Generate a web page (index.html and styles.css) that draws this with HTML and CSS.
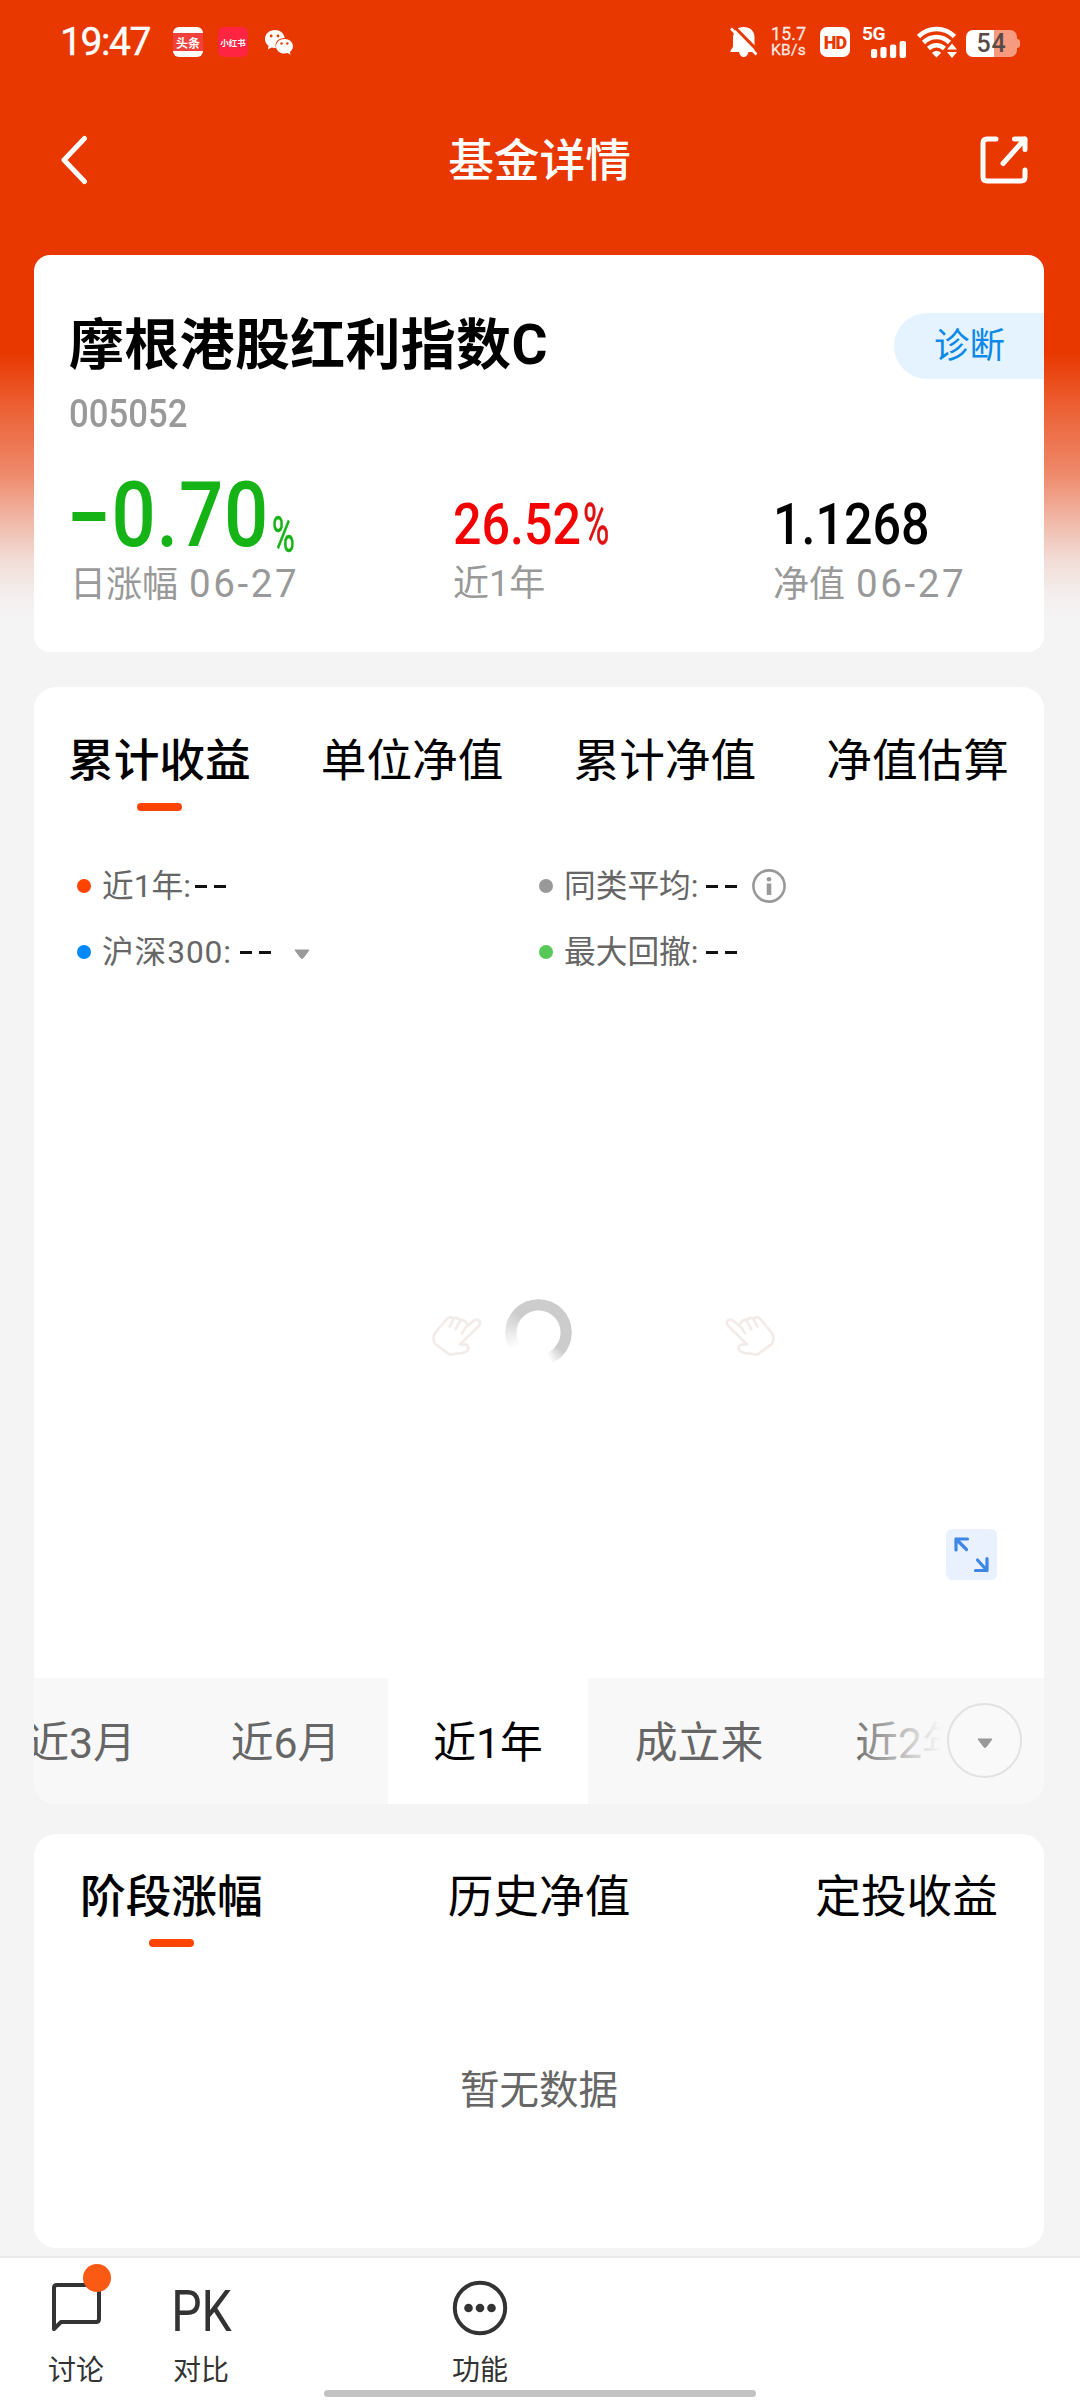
FILE: index.html
```html
<!DOCTYPE html>
<html lang="zh-CN">
<head>
<meta charset="utf-8">
<title>基金详情</title>
<link rel="stylesheet" href="styles.css">
</head>
<body>
<div class="screen">
  <div class="status">
    <span class="time">19:47</span>
    <span class="app toutiao"><span>头条</span></span>
    <span class="app xhs"><span>小红书</span></span>
    <svg class="wechat" width="30" height="26" viewBox="0 0 30 26"><path d="M11 1C5 1 1 5 1 10c0 3 1.400 5.300 3.600 7l-.8 3.500 3.700-2c1 .3 2.300.500 3.500.500l.8 0C10.500 12.500 14.500 9 20.700 9 20 4 16 1 11 1z" fill="#fff"/><path d="M20.500 10c-4.900 0-8.500 3.200-8.500 7.300s3.600 7.300 8.500 7.300c1.100 0 2.100-.2 3.100-.5l3 1.700-.7-2.900c2-1.400 3.100-3.400 3.100-5.600 0-4.100-3.600-7.300-8.500-7.300z" fill="#fff"/><g fill="#e83800"><circle cx="7.200" cy="7" r="1.400"/><circle cx="14" cy="7" r="1.400"/><circle cx="17.500" cy="14.500" r="1.200"/><circle cx="23.300" cy="14.500" r="1.200"/></g></svg>
    <span class="spring"></span>
    <svg class="bell" width="28" height="32" viewBox="0 0 28 32"><path d="M13.500 1C7 1 3 5 3 11v10l-2.500 3.500V26H9c.6 3 2.500 5 4.700 5s4.200-2 4.800-5h6L24.500 21V11C24.500 5 20 1 13.500 1z" fill="#fff"/><path d="M-1 2L3.500 6.500V9L0 14z" fill="#e83800"/><path d="M3.500 0L28 25" stroke="#e83800" stroke-width="3"/><path d="M1 2.500L26.500 28.500" stroke="#fff" stroke-width="2.600"/></svg>
    <span class="speed"><span>15.7</span><span>KB/s</span></span>
    <span class="hd">HD</span>
    <span class="signal"><span class="g5">5G</span><svg width="36" height="18" viewBox="0 0 36 18" fill="#fff"><rect x="0" y="9" width="6.200" height="9" rx="2"/><rect x="9.400" y="7" width="6.200" height="11" rx="2"/><rect x="19" y="4.500" width="6.200" height="13.500" rx="2"/><rect x="28.600" y="1" width="6.400" height="17" rx="2"/></svg></span>
    <svg class="wifi" width="41" height="32" viewBox="0 0 41 32"><g fill="none" stroke="#fff" stroke-width="4.600"><path d="M1.500 10.500C11.500.5 27.500.5 37.500 10.500"/><path d="M6.500 16.500c7.500-7.300 18.500-7.300 26 0"/><path d="M11.500 22.500c4.600-4.300 11.400-4.300 16 0"/></g><path d="M15 27c2.500-2.600 6.500-2.600 9 0l-4.500 4.500z" fill="#fff"/><path d="M35 15.500l-7 8.500v3l7 8 7-9z" fill="#e83800"/><path d="M35 17.500l5 6h-10zM30 26h10l-5 6z" fill="#fff"/></svg>
    <span class="battery"><span>54</span></span>
  </div>

  <div class="nav">
    <svg width="28" height="50" viewBox="0 0 28 50"><path d="M24.500 3.500L4 25l20.500 21.500" fill="none" stroke="#fff" stroke-width="5" stroke-linecap="round" stroke-linejoin="round"/></svg>
    <h1>基金详情</h1>
    <svg width="50" height="50" viewBox="0 0 50 50" fill="none" stroke="#fff" stroke-width="5" stroke-linecap="round" stroke-linejoin="round"><path d="M17 4H8Q4 4 4 8v34q0 4 4 4h34q4 0 4-4v-7"/><path d="M35.500 4h10.500v10.500M46 4L24 28.500"/></svg>
  </div>

  <div class="card summary">
    <div class="fund-head"><h2>摩根港股红利指数C</h2><span class="diag">诊断</span></div>
    <div class="code"><span>005052</span></div>
    <div class="stats">
      <div class="stat green"><div class="value"><span class="big"><i class="minus"></i>0.70</span><span class="pct">%</span></div><div class="label">日涨幅 <span>06-27</span></div></div>
      <div class="stat red"><div class="value"><span class="num">26.52</span><span class="pct">%</span></div><div class="label">近1年</div></div>
      <div class="stat"><div class="value"><span class="num">1.1268</span></div><div class="label">净值 <span>06-27</span></div></div>
    </div>
  </div>

  <div class="card chart-card">
    <div class="tabs">
      <span class="tab active">累计收益</span><span class="tab">单位净值</span><span class="tab">累计净值</span><span class="tab">净值估算</span>
    </div>
    <div class="legend">
      <div class="year"><i class="dot orange"></i><span>近1年:</span><b><i></i><i></i></b></div>
      <div><i class="dot grey"></i><span>同类平均:</span><b><i></i><i></i></b><svg class="info" width="34" height="34" viewBox="0 0 34 34"><circle cx="17" cy="17" r="15.600" fill="none" stroke="#999" stroke-width="2.600"/><circle cx="17" cy="10.300" r="2.300" fill="#999"/><path d="M17 14.500V26" stroke="#999" stroke-width="4.600"/></svg></div>
      <div class="wide"><i class="dot blue"></i><span>沪深300:</span><b><i></i><i></i></b><svg class="caret" width="18" height="11" viewBox="0 0 18 11"><path d="M2 1h14L10.500 8.500q-1.500 2-3 0z" fill="#999" stroke="#999" stroke-linejoin="round"/></svg></div>
      <div><i class="dot lime"></i><span>最大回撤:</span><b><i></i><i></i></b></div>
    </div>
    <div class="chart">
      <div class="hint">
        <svg class="hand" width="52" height="44" viewBox="94 130 156 132"><path d="M150 252L107 220Q101 214 102 197 103 191 108 185L141 145Q150 136 163 143 171 139 181 148 192 145 198 155 203 157 203 167L224 149Q236 143 241 153 243 160 237 166L181 221 200 222Q210 228 204 239 199 244 188 247ZM150 168L162 144M168 176L182 150M187 188L202 164" fill="none" stroke="#f2ebe8" stroke-width="8" stroke-linejoin="round" stroke-linecap="round"/></svg>
        <span class="spinner"></span>
        <svg class="hand flip" width="52" height="44" viewBox="94 130 156 132"><path d="M150 252L107 220Q101 214 102 197 103 191 108 185L141 145Q150 136 163 143 171 139 181 148 192 145 198 155 203 157 203 167L224 149Q236 143 241 153 243 160 237 166L181 221 200 222Q210 228 204 239 199 244 188 247ZM150 168L162 144M168 176L182 150M187 188L202 164" fill="none" stroke="#f2ebe8" stroke-width="8" stroke-linejoin="round" stroke-linecap="round"/></svg>
      </div>
      <svg class="expand" width="51" height="51" viewBox="0 0 51 51"><rect width="51" height="51" rx="6" fill="#e8f1fd"/><g fill="none" stroke="#3e87e6" stroke-width="3.200" stroke-linecap="round" stroke-linejoin="round"><path d="M10 21V10h11.500M10 10l10.500 10.500M41 29.500V41.500H29.500M41 41.500L31.500 31"/></g></svg>
    </div>
    <div class="periods">
      <span>近3月</span><span>近6月</span><span class="on">近1年</span><span>成立来</span><span>近2年</span>
      <div class="fade"><div class="more"><svg width="18" height="11" viewBox="0 0 18 11"><path d="M2 1h14L10.500 8.500q-1.500 2-3 0z" fill="#999" stroke="#999" stroke-linejoin="round"/></svg></div></div>
    </div>
  </div>

  <div class="card history">
    <div class="tabs"><span class="tab active">阶段涨幅</span><span class="tab">历史净值</span><span class="tab">定投收益</span></div>
    <div class="empty">暂无数据</div>
  </div>

  <div class="bottom">
    <div class="action discuss"><span class="icon"><svg width="54" height="54" viewBox="0 0 54 54"><path d="M5 49V8q0-3 3-3h39q3 0 3 3v31q0 3-3 3H12z" fill="none" stroke="#333" stroke-width="4" stroke-linejoin="round"/></svg><i class="badge"></i></span><span>讨论</span></div>
    <div class="action compare"><span class="icon pk"><span>PK</span></span><span>对比</span></div>
    <div class="action more-fn"><span class="icon"><svg width="56" height="56" viewBox="0 0 56 56"><circle cx="28" cy="28" r="25.200" fill="none" stroke="#333" stroke-width="4"/><g fill="#333"><circle cx="16.500" cy="28" r="4.300"/><circle cx="28" cy="28" r="4.300"/><circle cx="39.500" cy="28" r="4.300"/></g></svg></span><span>功能</span></div>
    <div class="home"></div>
  </div>
</div>
</body>
</html>
```
FILE: styles.css
```css
* { box-sizing: border-box; margin: 0; padding: 0; }
body { font-family: Roboto, "Noto Sans CJK SC", sans-serif; color: #000; }
i { font-style: normal; }
svg { display: block; flex: none; }
.screen {
  width: 1080px; height: 2400px; overflow: hidden;
  display: flex; flex-direction: column;
  background: linear-gradient(#e83800 0, #e83800 352px, #ea4a18 378px, #ec6034 407px, #ee8a6c 475px, #f0b5a3 517px, #f2dcd6 560px, #f4efee 595px, #f4f4f4 620px);
}
.status { height: 84px; flex: none; display: flex; align-items: center; padding: 0 63px 0 60px; color: #fff; }
.time { font-size: 39px; letter-spacing: -1.4px; width: 113px; font-weight: 400; -webkit-text-stroke: .4px #fff; }
.app { width: 30px; height: 30px; border-radius: 6px; overflow: hidden; display: flex; align-items: center; justify-content: center; white-space: nowrap; margin-right: 15px; font-weight: 700; }
.toutiao { background: linear-gradient(#fff 6px, #f2413c 6px, #f2413c 24px, #fff 24px); font-size: 12px; }
.xhs { background: #ff2442; font-size: 8.500px; }
.wechat { margin-left: 1px; }
.spring { flex: 1; }
.bell { margin-right: 13px; }
.speed { display: flex; flex-direction: column; width: 49px; font-size: 15.500px; line-height: 15px; color: #ffe9e2; }
.speed span { letter-spacing: .3px; -webkit-text-stroke: .3px #ffe9e2; }
.speed span:first-child { font-size: 17.500px; line-height: 17px; }
.hd { width: 30px; height: 30px; border-radius: 7px; background: #fff; color: #e83800; font-size: 18px; font-weight: 900; line-height: 31px; text-align: center; letter-spacing: -.8px; }
.signal { width: 45px; height: 31px; margin-left: 12px; display: flex; flex-direction: column; align-items: flex-end; }
.g5 { font-size: 19px; line-height: 14px; height: 13px; font-weight: 700; align-self: flex-start; letter-spacing: -.5px; }
.wifi { margin-left: 10px; }
.battery { margin-left: 8px; margin-top: 2px; width: 51px; height: 27px; border-radius: 7px; background: linear-gradient(90deg, #fff 28px, #f69a80 28px); color: #5a4a47; font-size: 25px; font-weight: 500; line-height: 28px; letter-spacing: .8px; text-align: center; position: relative; }
.battery::after { content: ""; position: absolute; left: 51px; top: 9px; width: 3px; height: 9px; border-radius: 0 3px 3px 0; background: #f69a80; }

.nav { height: 152px; flex: none; display: flex; align-items: center; justify-content: space-between; padding: 0 51px 0 60px; color: #fff; margin-bottom: 19px; }
.nav h1 { font-size: 45.700px; font-weight: 500; line-height: 60px; margin-left: 12px; padding-top: 4px; }

.card { width: 1010px; margin-left: 34px; background: #fff; border-radius: 22px; flex: none; overflow: hidden; }
.summary { height: 397px; border-radius: 16px; padding: 58px 0 0 35px; margin-bottom: 35px; }
.fund-head { display: flex; justify-content: space-between; height: 66px; }
.fund-head h2 { font-size: 55px; line-height: 64px; font-weight: 700; letter-spacing: .3px; }
.diag { width: 150px; padding-left: 40px; font-size: 35.500px; line-height: 66px; color: #0d89e8; background: #e5f3ff; border-radius: 33px 0 0 33px; }
.code { height: 50px; margin-top: 9px; font-size: 39px; line-height: 52px; font-weight: 500; color: #999; }
.code span { display: inline-block; transform: scaleX(.89); transform-origin: left; }
.stats { display: grid; grid-template-columns: 383px 320px 1fr; }
.value { height: 118px; display: flex; align-items: flex-end; white-space: nowrap; font-weight: 500; }
.value span { display: block; transform-origin: left; }
.num { font-size: 58px; line-height: 60px; padding-bottom: 2px; margin-left: 1px; transform: scaleX(.865); }
.big { font-size: 90px; line-height: 90px; height: 85px; font-weight: 500; display: block; letter-spacing: 1px; transform: scaleX(.865); }
.minus { display: inline-block; width: 38px; height: 9px; margin: 0 7px 25px 4px; background: currentColor; }
.green .value { color: #15b315; }
.red .value { color: #f40000; }
.pct { font-weight: 400; }
.green .pct { font-size: 50px; line-height: 50px; height: 46px; margin-left: -28px; transform: scaleX(.62); -webkit-text-stroke: .6px; }
.red .pct { font-size: 58px; line-height: 60px; padding-bottom: 2px; margin-left: -18px; transform: scaleX(.62); color: #e01010; -webkit-text-stroke: .6px; }
.label { font-size: 36px; line-height: 44px; margin-top: 6px; padding-left: 1px; color: #999; white-space: nowrap; }
.label span { font-size: 38.500px; letter-spacing: 2.600px; margin-left: 2px; }

.chart-card { height: 1117px; padding-top: 45px; margin-bottom: 30px; display: flex; flex-direction: column; }
.tabs { display: flex; justify-content: space-between; padding: 0 35px 0 34px; }
.tab { font-size: 45.700px; line-height: 60px; height: 79px; white-space: nowrap; }
.tab.active { font-weight: 500; display: flex; flex-direction: column; align-items: center; }
.tab.active::after { content: ""; width: 45px; height: 8px; margin-top: 11px; border-radius: 4px; background: #ff4300; }
.legend { margin-top: 42px; padding-left: 43px; display: grid; grid-template-columns: 462px 1fr; grid-auto-rows: 66px; font-size: 31.700px; color: #666; }
.legend > div { display: flex; align-items: center; white-space: nowrap; }
.legend span { line-height: 60px; padding-top: 2px; }
.dot { width: 14px; height: 14px; border-radius: 50%; margin-right: 11px; }
.orange { background: #ff4300; } .grey { background: #999; } .blue { background: #0088ff; } .lime { background: #58c858; }
.legend b { display: flex; gap: 7px; margin-left: 8px; }
.legend .year b { margin-left: 4px; }
.legend b i { width: 12px; height: 3px; background: #111; }
.wide span { letter-spacing: .9px; }
.info { margin-left: 15px; }
.caret { margin-left: 22px; margin-top: 4px; }
.chart { flex: 1; display: flex; flex-direction: column; }
.hint { height: 68px; margin: 313px 0 0 397px; display: flex; align-items: center; }
.hand { margin-top: 8px; }
.flip { transform: scaleX(-1); margin-left: 152px; }
.spinner { width: 67px; height: 67px; margin-left: 22px; border-radius: 50%; background: conic-gradient(#ccc 0 128deg, rgba(204,204,204,0) 158deg 238deg, #ccc 312deg); -webkit-mask: radial-gradient(circle, transparent 21.500px, #000 22.500px); mask: radial-gradient(circle, transparent 21.500px, #000 22.500px); }
.expand { align-self: flex-end; margin: 163px 47px 0 0; }
.periods { position: relative; height: 126px; flex: none; background: #f8f8f8; display: grid; grid-template-columns: 204px 205px 200px 222px 200px; margin-left: -55px; width: 1065px; font-size: 42.800px; line-height: 131px; color: #666; text-align: center; white-space: nowrap; }
.on { background: #fff; color: #000; }
.fade { position: absolute; right: 0; top: 0; width: 184px; height: 126px; padding: 25px 22px 0 0; line-height: 0; display: flex; justify-content: flex-end; background: linear-gradient(90deg, rgba(248,248,248,.15), rgba(248,248,248,.8) 60px, #f8f8f8 82px); }
.more { width: 75px; height: 75px; border: 2px solid #e2e2e2; border-radius: 50%; background: #f9f9f9; display: flex; align-items: center; justify-content: center; padding-top: 5px; }

.history { height: 414px; padding-top: 34px; margin-bottom: 8px; }
.history .tabs { padding: 0 46px 0 46px; }
.empty { text-align: center; font-size: 39.500px; line-height: 60px; margin-top: 114px; color: #666; }

.bottom { position: relative; flex: 1; border-top: 2px solid #ebebeb; background: #fff; display: flex; color: #333; font-size: 28px; padding-left: 34px; }
.action { width: 84px; display: flex; flex-direction: column; align-items: center; line-height: 40px; }
.icon { position: relative; height: 93px; width: 84px; display: flex; justify-content: center; padding-top: 22px; }
.compare { margin-left: 41px; }
.more-fn { margin-left: 195px; }
.badge { position: absolute; left: 49px; top: 6px; width: 28px; height: 28px; border-radius: 50%; background: #fb5a14; }
.pk { font-size: 58px; line-height: 62px; color: #333; white-space: nowrap; }
.pk span { transform: scaleX(.83); }
.home { position: absolute; left: 324px; top: 132px; width: 432px; height: 7px; border-radius: 4px; background: #c2c2c2; }
```
